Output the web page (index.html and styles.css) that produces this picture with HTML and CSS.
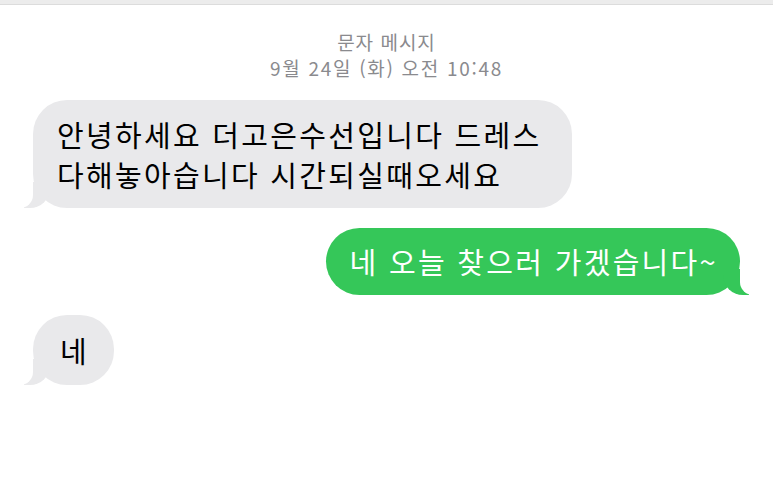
FILE: index.html
```html
<!DOCTYPE html>
<html lang="ko">
<head>
    <meta charset="UTF-8">
    <meta name="viewport" content="width=device-width, initial-scale=1.0">
    <title>문자 메시지</title>
    <link rel="stylesheet" href="styles.css">
</head>
<body>
    <div class="top-bar"></div>

    <div class="header">
        <div class="header-title">문자 메시지</div>
        <div class="header-date">9월 24일 (화) 오전 10:48</div>
    </div>

    <div class="messages">
        <div class="bubble from-them long">안녕하세요 더고은수선입니다 드레스<br>다해놓아습니다 시간되실때오세요</div>
        <div class="bubble from-me">네 오늘 찾으러 가겠습니다~</div>
        <div class="bubble from-them short">네</div>
    </div>
</body>
</html>
```

FILE: styles.css
```css
body {
    margin: 0;
    padding: 0;
    background: #fff;
    font-family: "Noto Sans CJK KR", "Noto Sans", sans-serif;
    overflow: hidden;
}

.top-bar {
    height: 4px;
    background: #ececec;
    border-bottom: 1px solid #dcdcdc;
}

.header {
    text-align: center;
    color: #8a8a8e;
    font-size: 19px;
    line-height: 26px;
    padding-top: 24px;
}

.header-title {
    letter-spacing: 1px;
}

.header-date {
    letter-spacing: 1.7px;
}

.messages {
    display: flex;
    flex-direction: column;
    gap: 20px;
    padding: 19px 33px 0;
}

.bubble {
    position: relative;
    font-size: 29px;
    line-height: 40px;
    letter-spacing: 2.3px;
    padding: 14px 22px 14px 24px;
    border-radius: 34px;
    max-width: 80%;
}

.long {
    padding-right: 30px;
}

.from-them {
    align-self: flex-start;
    background: #e9e9eb;
    color: #000;
}

.from-me {
    align-self: flex-end;
    background: #35c759;
    color: #fff;
    padding-top: 13px;
    padding-bottom: 14px;
}

.short {
    padding: 15px 25px 15px 27px;
}

.bubble::before,
.bubble::after {
    content: "";
    position: absolute;
    bottom: 0;
    height: 26px;
}

.from-them::before {
    left: -9px;
    width: 26px;
    background: #e9e9eb;
    border-bottom-right-radius: 20px;
}

.from-them::after {
    left: -28px;
    width: 28px;
    background: #fff;
    border-bottom-right-radius: 13px;
}

.from-me::before {
    right: -9px;
    width: 26px;
    background: #35c759;
    border-bottom-left-radius: 20px;
}

.from-me::after {
    right: -28px;
    width: 28px;
    background: #fff;
    border-bottom-left-radius: 13px;
}
```
